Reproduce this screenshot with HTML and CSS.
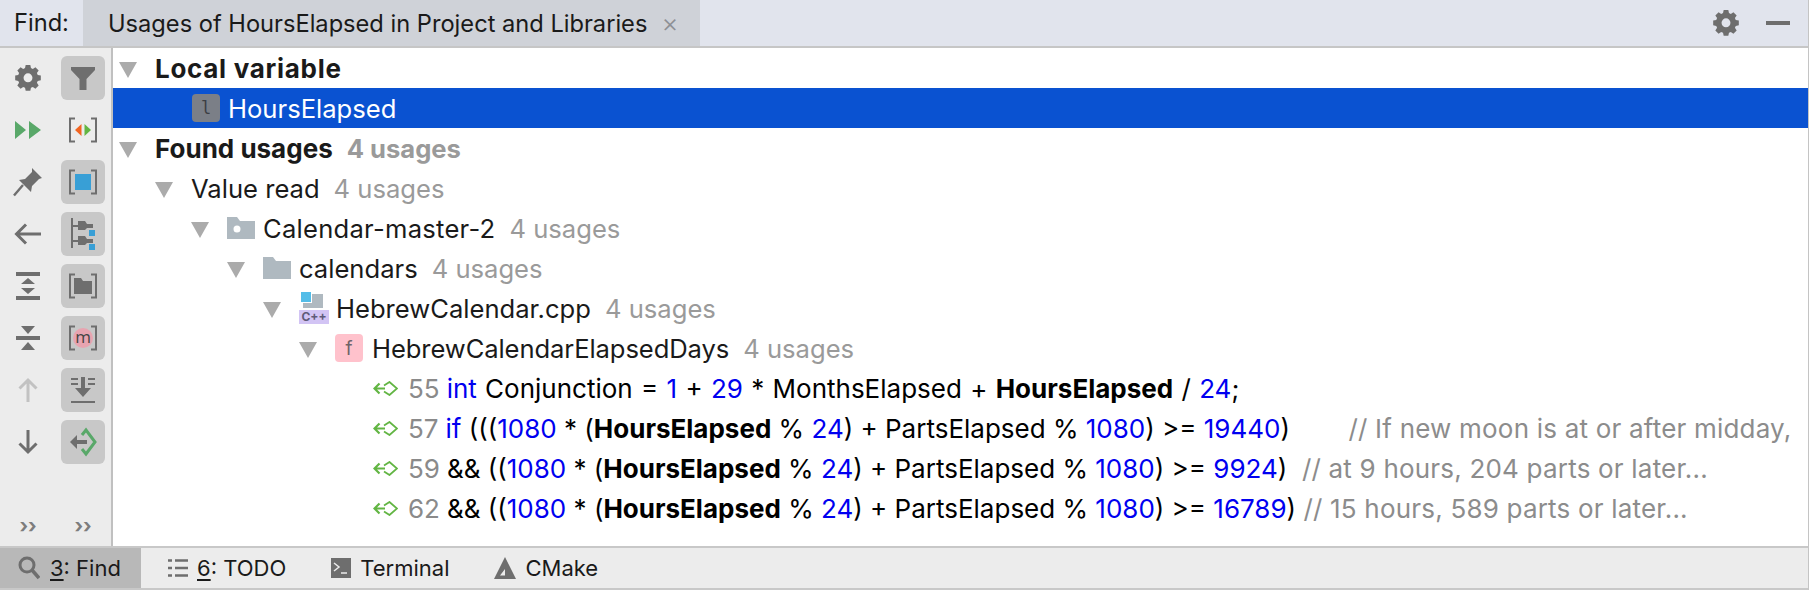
FILE: index.html
```html
<!DOCTYPE html>
<html lang="en">
<head>
<meta charset="utf-8">
<title>Find</title>
<link rel="stylesheet" href="styles.css">
</head>
<body>
<svg width="0" height="0" class="defs">
  <defs>
    <path id="gear" d="M9.500 0h5l.7 3.300 2 .9L20 2.300l3.500 3.500-1.900 2.900.9 2 3.300.7v5l-3.300.7-.9 2 1.900 2.900-3.500 3.500-2.800-1.900-2 .9-.7 3.300h-5l-.7-3.300-2-.9L4 25.500.500 22l1.900-2.900-.9-2-3.300-.7v-5l3.300-.7.9-2L.500 5.800 4 2.300l2.800 1.900 2-.9zM12 9a4.800 4.800 0 1 0 0 9.600A4.800 4.800 0 0 0 12 9z" fill-rule="evenodd"/>
    <g id="usage">
      <path d="M12 7.500H1.500M6.500 2.500 1.500 7.500l5 5" fill="none" stroke="#62b543" stroke-width="2.200"/>
      <path d="M11 4.500 16.500 1 24 7.500 16.500 14 11 10.500" fill="none" stroke="#62b543" stroke-width="1.800"/>
    </g>
  </defs>
</svg>
<div class="window">
  <header class="topbar">
    <div class="find-label">Find:</div>
    <div class="tab"><span>Usages of HoursElapsed in Project and Libraries</span><span class="tab-close">×</span></div>
    <div class="top-actions">
      <svg class="i-gear" width="26" height="26" viewBox="-2 0 28 28"><use href="#gear" fill="#6e6e6e"/></svg>
      <span class="minimize"></span>
    </div>
  </header>
  <main class="main">
    <aside class="sidebar">
      <div class="tools">
        <div class="tool"><svg width="26" height="26" viewBox="-2 0 28 28"><use href="#gear" fill="#6e6e6e"/></svg></div>
        <div class="tool on"><svg width="26" height="26" viewBox="0 0 26 26"><path d="M1 2h24v3l-8.500 9v11h-7V14L1 5z" fill="#6e6e6e"/></svg></div>

        <div class="tool"><svg width="28" height="20" viewBox="0 0 28 20"><path d="M1 1l11 9-11 9zM15 1l12 9-12 9z" fill="#59a869"/></svg></div>
        <div class="tool"><svg width="30" height="26" viewBox="0 0 30 26"><path d="M7 1.500H2v23h5M23 1.500h5v23h-5" fill="none" stroke="#6e6e6e" stroke-width="2"/><path d="M13.500 7v12L7 13z" fill="#f26522"/><path d="M16.500 7v12l6.500-6z" fill="#62b543"/></svg></div>

        <div class="tool"><svg width="30" height="30" viewBox="0 0 30 30"><path d="M19 1l10 10-3 1-7 7-1 6-12-12 6-1 7-7z" fill="#6e6e6e"/><path d="M10 18 1 28.500" stroke="#6e6e6e" stroke-width="2.400" fill="none"/></svg></div>
        <div class="tool on"><svg width="30" height="26" viewBox="0 0 30 26"><path d="M7 1.500H2v23h5M23 1.500h5v23h-5" fill="none" stroke="#6e6e6e" stroke-width="2"/><rect x="7" y="5" width="16" height="16" fill="#389fd6"/></svg></div>

        <div class="tool"><svg width="28" height="22" viewBox="0 0 28 22"><path d="M27 11H3M12 1.500 2.500 11l9.500 9.500" fill="none" stroke="#6e6e6e" stroke-width="3"/></svg></div>
        <div class="tool on"><svg width="24" height="32" viewBox="0 0 24 32"><path d="M1 0v30M1 8h9M1 23h9" stroke="#6e6e6e" stroke-width="2" fill="none"/><path d="M7 3h7l2 3h6v4h-6l-2 2H7zM7 18h7l2 3h6v4h-6l-2 2H7z" fill="#6e6e6e"/><rect x="18" y="12" width="6" height="6" fill="#389fd6"/><rect x="18" y="26" width="6" height="6" fill="#389fd6"/></svg></div>

        <div class="tool"><svg width="24" height="28" viewBox="0 0 24 28"><path d="M0 0h24v4H0zM0 24h24v4H0zM12 6l7 6H5zM12 22l-7-6h14z" fill="#6e6e6e"/></svg></div>
        <div class="tool on"><svg width="30" height="26" viewBox="0 0 30 26"><path d="M7 1.500H2v23h5M23 1.500h5v23h-5" fill="none" stroke="#6e6e6e" stroke-width="2"/><path d="M6 5h7l2 3h9v13H6z" fill="#6e6e6e"/></svg></div>

        <div class="tool"><svg width="24" height="24" viewBox="0 0 24 24"><path d="M0 10h24v4H0zM12 8 5 0h14zM12 16l7 8H5z" fill="#6e6e6e"/></svg></div>
        <div class="tool on"><svg width="30" height="26" viewBox="0 0 30 26"><path d="M7 1.500H2v23h5M23 1.500h5v23h-5" fill="none" stroke="#6e6e6e" stroke-width="2"/><circle cx="15" cy="13" r="10" fill="#e8a4b0"/><text x="15" y="18" class="m-letter">m</text></svg></div>

        <div class="tool"><svg width="20" height="24" viewBox="0 0 20 24"><path d="M10 24V3M1.500 10.500 10 2l8.500 8.500" fill="none" stroke="#c2c2c2" stroke-width="3"/></svg></div>
        <div class="tool on"><svg width="26" height="26" viewBox="0 0 26 26"><path d="M1 2h7M1 7h7M18 2h7M18 7h7M1 25h24" stroke="#6e6e6e" stroke-width="2" fill="none"/><path d="M11 0h4v11h6l-8 9-8-9h6z" fill="#6e6e6e"/></svg></div>

        <div class="tool"><svg width="20" height="24" viewBox="0 0 20 24"><path d="M10 0v21M1.500 13.500 10 22l8.500-8.500" fill="none" stroke="#6e6e6e" stroke-width="3"/></svg></div>
        <div class="tool on"><svg width="28" height="28" viewBox="0 0 28 28"><path d="M13 7l4-5 9 12-9 12-4-5" fill="none" stroke="#59a869" stroke-width="3"/><path d="M18 14H6" stroke="#6e6e6e" stroke-width="4"/><path d="M8 7 1 14l7 7z" fill="#6e6e6e"/></svg></div>
      </div>
      <div class="more"><span>››</span><span>››</span></div>
    </aside>
    <section class="tree">
      <div class="row"><i class="tri"></i><b class="strong wide">Local variable</b></div>
      <div class="row selected l1"><i class="tri-gap"></i><span class="var-icon">l</span><span>HoursElapsed</span></div>
      <div class="row"><i class="tri"></i><b class="strong">Found usages</b><b class="count">4 usages</b></div>
      <div class="row l1"><i class="tri"></i><span>Value read</span><span class="count">4 usages</span></div>
      <div class="row l2"><i class="tri"></i><svg class="node" width="28" height="22" viewBox="0 0 28 22"><path d="M0 0h10l3 4h15v18H0zM10 8.500a3.500 3.500 0 1 0 0 7 3.500 3.500 0 0 0 0-7z" fill="#afb9c0" fill-rule="evenodd"/></svg><span class="loose">Calendar-master-2</span><span class="count">4 usages</span></div>
      <div class="row l3"><i class="tri"></i><svg class="node" width="28" height="22" viewBox="0 0 28 22"><path d="M0 0h10l3 4h15v18H0z" fill="#afb9c0"/></svg><span>calendars</span><span class="count">4 usages</span></div>
      <div class="row l4"><i class="tri"></i><span class="cpp"><svg width="30" height="18" viewBox="0 0 30 18"><rect x="4" y="2" width="20" height="14" fill="#afb9c0"/><rect x="2" y="0" width="11" height="11" fill="#fff"/><rect x="2" y="0" width="10" height="10" fill="#53bde8"/></svg><span class="cpp-tag">C++</span></span><span>HebrewCalendar.cpp</span><span class="count">4 usages</span></div>
      <div class="row l5"><i class="tri"></i><span class="fn-icon">f</span><span class="tight">HebrewCalendarElapsedDays</span><span class="count">4 usages</span></div>
      <div class="row code"><svg class="use" width="25" height="15" viewBox="0 0 25 15"><use href="#usage"/></svg><span class="ln">55</span><span class="src spaced"><em>int</em> Conjunction = <em>1</em> + <em>29</em> * MonthsElapsed + <b>HoursElapsed</b> / <em>24</em>;</span></div>
      <div class="row code"><svg class="use" width="25" height="15" viewBox="0 0 25 15"><use href="#usage"/></svg><span class="ln">57</span><span class="src"><em>if</em> (((<em>1080</em> * (<b>HoursElapsed</b> % <em>24</em>) + PartsElapsed % <em>1080</em>) &gt;= <em>19440</em>)        <u>// If new moon is at or after midday,</u></span></div>
      <div class="row code"><svg class="use" width="25" height="15" viewBox="0 0 25 15"><use href="#usage"/></svg><span class="ln">59</span><span class="src">&amp;&amp; ((<em>1080</em> * (<b>HoursElapsed</b> % <em>24</em>) + PartsElapsed % <em>1080</em>) &gt;= <em>9924</em>)  <u>// at 9 hours, 204 parts or later...</u></span></div>
      <div class="row code"><svg class="use" width="25" height="15" viewBox="0 0 25 15"><use href="#usage"/></svg><span class="ln">62</span><span class="src">&amp;&amp; ((<em>1080</em> * (<b>HoursElapsed</b> % <em>24</em>) + PartsElapsed % <em>1080</em>) &gt;= <em>16789</em>) <u>// 15 hours, 589 parts or later...</u></span></div>
    </section>
  </main>
  <footer class="statusbar">
    <div class="st active"><svg width="22" height="24" viewBox="0 0 22 24"><circle cx="9" cy="9" r="7" fill="none" stroke="#6e6e6e" stroke-width="3"/><path d="M14 14l7 8" stroke="#6e6e6e" stroke-width="3.500"/></svg><span><span class="ul">3</span>: Find</span></div>
    <div class="st"><svg width="20" height="18" viewBox="0 0 20 18"><path d="M0 1.500h4M7 1.500h13M0 9h4M7 9h13M0 16.500h4M7 16.500h13" stroke="#6e6e6e" stroke-width="2.400"/></svg><span><span class="ul">6</span>: TODO</span></div>
    <div class="st"><svg width="20" height="20" viewBox="0 0 20 20"><rect width="20" height="20" fill="#6e6e6e"/><path d="M3 5l5 4-5 4M10 15h6" fill="none" stroke="#ececec" stroke-width="1.500"/></svg><span>Terminal</span></div>
    <div class="st"><svg width="22" height="22" viewBox="0 0 22 22"><path d="M11 0l11 22H0zM11 12l-5 6.500h5z" fill="#6e6e6e" fill-rule="evenodd"/></svg><span>CMake</span></div>
  </footer>
</div>
</body>
</html>
```
FILE: styles.css
```css
* { box-sizing: border-box; }
html, body { margin: 0; height: 100%; }
body {
  font-family: Inter, "Liberation Sans", sans-serif;
  font-size: 23.650px;
  color: #1a1a1a;
  background: #fff;
  overflow: hidden;
}
.defs { display: block; height: 0; }
.window { width: 1809px; height: 590px; display: flex; flex-direction: column; border-right: 1px solid #c4c4c4; }

.topbar { height: 48px; display: flex; background: #e1e4ed; border-bottom: 2px solid #c6c6c6; flex: none; }
.find-label { width: 83px; padding-left: 14px; line-height: 46px; }
.tab { width: 617px; background: #cfd2d8; padding-left: 25px; display: flex; align-items: center; gap: 14px; white-space: nowrap; }
.tab-close { color: #8d8f94; font-size: 26px; line-height: 1; font-weight: 300; }
.top-actions { margin-left: auto; display: flex; align-items: center; gap: 27px; padding-right: 18px; }
.minimize { width: 24px; height: 4px; background: #6e6e6e; }

.main { flex: 1; display: flex; min-height: 0; }
.sidebar { width: 113px; background: #ececec; border-right: 2px solid #c0c0c0; display: flex; flex-direction: column; padding: 8px 6px 0 6px; flex: none; }
.tools { display: grid; grid-template-columns: 44px 44px; column-gap: 11px; row-gap: 8px; }
.tool { width: 44px; height: 44px; border-radius: 6px; display: flex; align-items: center; justify-content: center; }
.tool.on { background: #c8c8c8; }
.tool svg { overflow: visible; flex: none; }
.m-letter { font-family: "Open Sans", sans-serif; font-size: 17px; fill: #444; text-anchor: middle; }
.more { margin-top: auto; display: grid; grid-template-columns: 44px 44px; column-gap: 11px; text-align: center; color: #7d7d7d; height: 30px; line-height: 20px; font-size: 20px; font-weight: 700; }

.tree { flex: 1; background: #fff; min-width: 0; font-size: 25.600px; }
.row { height: 40px; display: flex; align-items: center; padding-left: 6px; white-space: nowrap; }
.tri { width: 18px; height: 16px; margin-right: 18px; margin-top: 4px; flex: none; background: #ababab; clip-path: polygon(0 0, 100% 0, 50% 100%); }
.tri-gap { width: 37px; flex: none; }
.l1 { padding-left: 42px; }
.l2 { padding-left: 78px; }
.l3 { padding-left: 114px; }
.l4 { padding-left: 150px; }
.l5 { padding-left: 186px; }
.strong { font-weight: 700; font-size: 26px; }
.wide { letter-spacing: .7px; }
.loose { letter-spacing: .25px; }
.tight { letter-spacing: -.1px; }
.count { color: #9a9a9a; margin-left: 14px; }
.selected { background: #0a52d1; color: #fff; }
.var-icon { width: 28px; height: 28px; background: #7b7f87; border-radius: 4px; color: #3b3e44; font-family: "DejaVu Sans Mono", monospace; font-size: 17px; display: flex; align-items: center; justify-content: center; margin-right: 8px; }
.node { margin-right: 8px; flex: none; }
.cpp { width: 30px; height: 32px; margin-right: 7px; display: flex; flex-direction: column; flex: none; }
.cpp svg { display: block; }
.cpp-tag { height: 14px; background: #d2c4f4; color: #5f5a78; font-size: 12px; font-weight: 700; line-height: 14px; text-align: center; }
.fn-icon { width: 28px; height: 28px; background: #ffc2cc; border-radius: 4px; color: #6f6468; font-size: 19px; display: flex; align-items: center; justify-content: center; margin-right: 9px; }
.code { padding-left: 260px; color: #000; font-size: 26px; }
.use { margin-right: 10px; flex: none; }
.ln { color: #8a8a8a; margin-right: 7px; }
.src { white-space: pre; }
.spaced { word-spacing: 1px; }
.code em { font-style: normal; color: #0000f0; }
.code b { font-weight: 700; }
.code u { text-decoration: none; color: #8c8c8c; letter-spacing: .2px; }

.statusbar { height: 44px; background: #ececec; border-top: 2px solid #c8c8c8; border-bottom: 2px solid #c8c8c8; display: flex; flex: none; font-size: 22px; }
.st { display: flex; align-items: center; gap: 9px; padding: 0 18px 0 27px; }
.st.active { background: #b8b8b8; width: 141px; padding: 0 0 0 18px; gap: 10px; }
.ul { text-decoration: underline; text-underline-offset: 3px; }
```
